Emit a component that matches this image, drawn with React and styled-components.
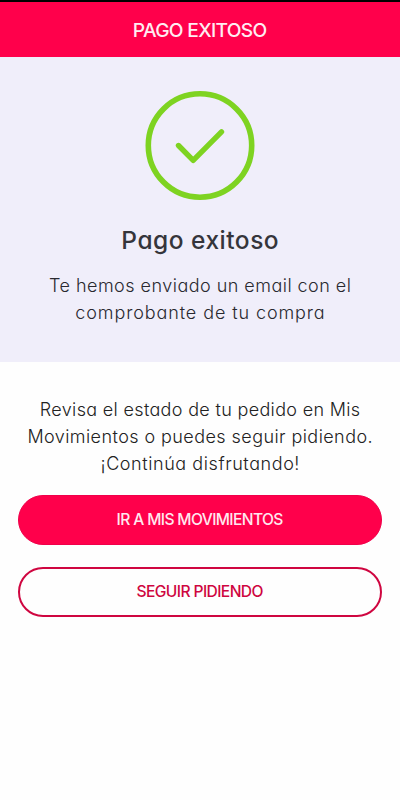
import React from "react";
import styled, { createGlobalStyle } from "styled-components";

const GlobalStyle = createGlobalStyle`
  *, *::before, *::after { box-sizing: border-box; }
  body {
    margin: 0;
    background: #fefefe;
    font-family: Inter, "Liberation Sans", sans-serif;
    font-feature-settings: "cv11";
  }
`;

const Screen = styled.div`
  display: flex;
  flex-direction: column;
  height: 800px;
  border-top: 2px solid #000;
  background: #fefefe;
`;

const Header = styled.header`
  display: flex;
  align-items: center;
  justify-content: center;
  height: 55px;
  background: #ff004b;
  color: #ffecf2;
  font-size: 19.2px;
  font-weight: 500;
`;

const Summary = styled.section`
  display: flex;
  flex-direction: column;
  align-items: center;
  height: 305px;
  padding-top: 34px;
  background: #f0eefa;
`;

const CheckIcon = styled.svg`
  display: block;
  width: 110px;
  height: 110px;
  fill: none;
  stroke: #7ed321;
`;

const Title = styled.h1`
  margin: 21px 0 0;
  font-size: 24.5px;
  font-weight: 500;
  line-height: 36px;
  color: #35353b;
`;

const Paragraph = styled.p`
  margin: ${(p) => p.$top}px 0 0;
  color: ${(p) => p.$color};
  font-size: 18px;
  font-weight: 300;
  line-height: 26.8px;
  text-align: center;
`;

const Line = styled.span`
  display: ${(p) => (p.$inline ? "inline" : "block")};
  white-space: nowrap;
  letter-spacing: ${(p) => p.$track || 0}px;
  margin-right: ${(p) => -(p.$track || 0)}px;
`;

const Actions = styled.main`
  display: flex;
  flex-direction: column;
  padding: 0 18px;
`;

const Button = styled.button`
  height: 50px;
  margin: ${(p) => p.$top}px 0 0;
  padding: 0;
  border: ${(p) => (p.$outline ? "2px solid #cf0640" : "1px solid #f0004a")};
  border-radius: 25px;
  background: ${(p) => (p.$outline ? "#fefefe" : "#ff004b")};
  color: ${(p) => (p.$outline ? "#cf0640" : "#ffe8ef")};
  font-family: inherit;
  font-feature-settings: inherit;
  font-size: 15.6px;
  font-weight: 500;
`;

export default function App() {
  return (
    <>
      <GlobalStyle />
      <Screen>
        <Header>
          <Line $inline $track={-0.67}>PAGO EXITOSO</Line>
        </Header>
        <Summary>
          <CheckIcon viewBox="0 0 110 110" aria-hidden="true">
            <circle cx="55" cy="54.5" r="51.7" strokeWidth="5.6" />
            <path d="M33.5 54.5L48.2 69.3L76.5 40.8" strokeWidth="5.4" strokeLinecap="round" strokeLinejoin="round" />
          </CheckIcon>
          <Title>
            <Line $inline $track={0.5}>Pago exitoso</Line>
          </Title>
          <Paragraph $top={15} $color="#29292f">
            <Line $track={0.47}>Te hemos enviado un email con el</Line>
            <Line $track={0.9}>comprobante de tu compra</Line>
          </Paragraph>
        </Summary>
        <Actions>
          <Paragraph $top={35} $color="#222">
            <Line $track={0.33}>Revisa el estado de tu pedido en Mis</Line>
            <Line $track={0.43}>Movimientos o puedes seguir pidiendo.</Line>
            <Line $track={0.57}>¡Continúa disfrutando!</Line>
          </Paragraph>
          <Button $top={17.6}>
            <Line $inline $track={-0.63}>IR A MIS MOVIMIENTOS</Line>
          </Button>
          <Button $outline $top={22}>
            <Line $inline $track={-0.6}>SEGUIR PIDIENDO</Line>
          </Button>
        </Actions>
      </Screen>
    </>
  );
}
